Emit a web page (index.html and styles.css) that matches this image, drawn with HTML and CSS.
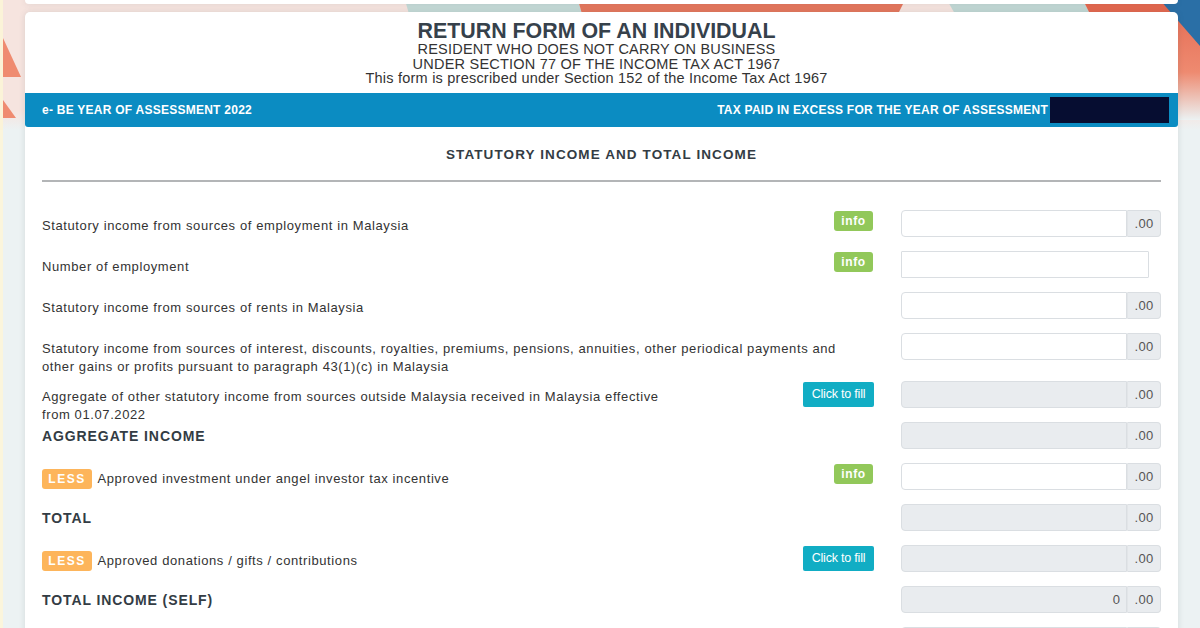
FILE: index.html
```html
<!DOCTYPE html>
<html lang="en">
<head>
    <meta charset="UTF-8">
    <meta name="viewport" content="width=device-width, initial-scale=1.0">
    <title>e-BE Year of Assessment 2022</title>
    <link rel="stylesheet" href="styles.css">
</head>
<body>
    <!-- decorative backdrop behind the cards -->
    <div class="backdrop">
        <svg width="1200" height="130" viewBox="0 0 1200 130" preserveAspectRatio="none">
            <defs>
                <linearGradient id="fade" x1="0" y1="0" x2="0" y2="1">
                    <stop offset="0" stop-color="#f6e4df"/>
                    <stop offset="0.85" stop-color="#f6e4df"/>
                    <stop offset="1" stop-color="#ecf2f3"/>
                </linearGradient>
                <linearGradient id="coralFade" x1="0" y1="0" x2="0" y2="1">
                    <stop offset="0" stop-color="#e46a52"/>
                    <stop offset="0.6" stop-color="#ee8a70"/>
                    <stop offset="1" stop-color="#ecf2f3"/>
                </linearGradient>
            </defs>
            <rect x="0" y="0" width="1200" height="130" fill="url(#fade)"/>
            <polygon points="0,0 3,0 3,130 0,130" fill="#fbf3d8"/>
            <polygon points="3,38 21,77 3,77" fill="#ef8b70"/>
            <polygon points="3,100 16,118 3,118" fill="#ef8b70"/>
            <polygon points="405,0 578,0 582,14 409,14" fill="#c5dad7"/>
            <polygon points="578,0 905,0 898,14 582,14" fill="#e5775d"/>
            <polygon points="947,0 1083,0 1090,14 955,14" fill="#c2d8d5"/>
            <polygon points="1083,0 1200,0 1200,14 1090,14" fill="#e4684f"/>
            <rect x="1178" y="0" width="22" height="120" fill="url(#coralFade)"/>
            <polygon points="1160,0 1200,0 1200,46" fill="#2a6fa6"/>
        </svg>
    </div>

    <div class="page">
        <div class="card card-top"></div>

        <div class="card form-card">
            <header class="form-head">
                <h1>RETURN FORM OF AN INDIVIDUAL</h1>
                <p>RESIDENT WHO DOES NOT CARRY ON BUSINESS<br>
                UNDER SECTION 77 OF THE INCOME TAX ACT 1967<br>
                This form is prescribed under Section 152 of the Income Tax Act 1967</p>
            </header>

            <div class="year-bar">
                <span>e- BE YEAR OF ASSESSMENT 2022</span>
                <span class="excess">TAX PAID IN EXCESS FOR THE YEAR OF ASSESSMENT<span class="redacted"></span></span>
            </div>

            <div class="form-body">
                <h2>STATUTORY INCOME AND TOTAL INCOME</h2>
                <hr>

                <div class="row">
                    <div class="label">Statutory income from sources of employment in Malaysia</div>
                    <div class="action"><span class="badge-info">info</span></div>
                    <div class="field"><input class="input" type="text"><span class="addon">.00</span></div>
                </div>

                <div class="row">
                    <div class="label">Number of employment</div>
                    <div class="action"><span class="badge-info">info</span></div>
                    <div class="field"><input class="input input-plain" type="text"></div>
                </div>

                <div class="row">
                    <div class="label">Statutory income from sources of rents in Malaysia</div>
                    <div class="action"></div>
                    <div class="field"><input class="input" type="text"><span class="addon">.00</span></div>
                </div>

                <div class="row row-tall">
                    <div class="label">Statutory income from sources of interest, discounts, royalties, premiums, pensions, annuities, other periodical payments and<br>other gains or profits pursuant to paragraph 43(1)(c) in Malaysia</div>
                    <div class="action"></div>
                    <div class="field"><input class="input" type="text"><span class="addon">.00</span></div>
                </div>

                <div class="row">
                    <div class="label">Aggregate of other statutory income from sources outside Malaysia received in Malaysia effective<br>from 01.07.2022</div>
                    <div class="action"><button class="btn-fill">Click to fill</button></div>
                    <div class="field"><input class="input readonly" type="text" readonly><span class="addon">.00</span></div>
                </div>

                <div class="row">
                    <div class="label heading">AGGREGATE INCOME</div>
                    <div class="action"></div>
                    <div class="field"><input class="input readonly" type="text" readonly><span class="addon">.00</span></div>
                </div>

                <div class="row">
                    <div class="label"><span class="badge-less">LESS</span> Approved investment under angel investor tax incentive</div>
                    <div class="action"><span class="badge-info">info</span></div>
                    <div class="field"><input class="input" type="text"><span class="addon">.00</span></div>
                </div>

                <div class="row">
                    <div class="label heading">TOTAL</div>
                    <div class="action"></div>
                    <div class="field"><input class="input readonly" type="text" readonly><span class="addon">.00</span></div>
                </div>

                <div class="row">
                    <div class="label"><span class="badge-less">LESS</span> Approved donations / gifts / contributions</div>
                    <div class="action"><button class="btn-fill">Click to fill</button></div>
                    <div class="field"><input class="input readonly" type="text" readonly><span class="addon">.00</span></div>
                </div>

                <div class="row">
                    <div class="label heading">TOTAL INCOME (SELF)</div>
                    <div class="action"></div>
                    <div class="field"><input class="input readonly num" type="text" value="0" readonly><span class="addon">.00</span></div>
                </div>

                <div class="row">
                    <div class="label"></div>
                    <div class="action"></div>
                    <div class="field"><input class="input" type="text"><span class="addon"></span></div>
                </div>
            </div>
        </div>
    </div>
</body>
</html>
```

FILE: styles.css
```css
body {
    margin: 0;
    font-family: "Liberation Sans", Arial, sans-serif;
    color: #333;
    background: linear-gradient(90deg, #fbf5dc 0, #fbf5dc 3px, #ecf2f3 3px);
    min-height: 628px;
    overflow: hidden;
}
.backdrop {
    position: absolute;
    top: 0;
    left: 0;
    width: 1200px;
    height: 130px;
    z-index: 0;
}
.backdrop svg {
    display: block;
}
.page {
    position: relative;
    z-index: 1;
    padding: 0 22px 0 25px;
}
.card {
    background: #fff;
    box-shadow: 0 0 6px rgba(60, 70, 80, 0.14);
}
.card-top {
    height: 4px;
    border-radius: 0 0 4px 4px;
    margin-bottom: 8px;
}
.form-card {
    border-radius: 5px 5px 0 0;
    min-height: 640px;
}
.form-head {
    text-align: center;
    padding: 9px 10px 7.5px 0;
}
.form-head h1 {
    margin: 0;
    font-size: 21.4px;
    line-height: 21px;
    font-weight: bold;
    color: #36414b;
}
.form-head p {
    margin: 0;
    font-size: 14.5px;
    line-height: 14.5px;
    letter-spacing: 0.22px;
    color: #333;
}
.year-bar {
    display: flex;
    justify-content: space-between;
    align-items: center;
    height: 34px;
    padding: 0 9px 0 17px;
    background: #0b8cc2;
    border-radius: 0 0 3px 3px;
    color: #fff;
    font-size: 12px;
    font-weight: bold;
    letter-spacing: 0.25px;
}
.excess {
    display: flex;
    align-items: center;
}
.redacted {
    display: inline-block;
    width: 119px;
    height: 26px;
    margin-left: 2px;
    background: #060d31;
}
.form-body {
    padding: 19px 17px 0;
}
.form-body h2 {
    margin: 0;
    text-align: center;
    font-size: 13.5px;
    line-height: 18px;
    letter-spacing: 1.1px;
    color: #333c44;
}
.form-body hr {
    margin: 15.5px 0 28px;
    border: 0;
    height: 2px;
    background: #b3b5b7;
}
.row {
    display: flex;
    height: 27px;
    margin-bottom: 14px;
}
.row-tall {
    height: 34px;
}
.label {
    flex: 1;
    min-width: 0;
    padding-top: 7px;
    font-size: 13px;
    line-height: 18px;
    letter-spacing: 0.6px;
    white-space: nowrap;
    color: #333;
}
.label.heading {
    padding-top: 5px;
    font-size: 14px;
    font-weight: bold;
    letter-spacing: 0.9px;
    color: #333c44;
}
.action {
    display: flex;
    justify-content: flex-end;
    align-items: flex-start;
    padding-top: 1px;
    margin-right: 28px;
}
.badge-info {
    display: inline-block;
    width: 39px;
    height: 20px;
    line-height: 20px;
    text-align: center;
    background: #92c85a;
    border-radius: 3px;
    color: #fff;
    font-size: 12px;
    font-weight: bold;
    letter-spacing: 0.6px;
}
.badge-less {
    display: inline-block;
    width: 50px;
    height: 20px;
    line-height: 20px;
    text-align: center;
    background: #fdb55b;
    border-radius: 3px;
    color: #fff;
    font-size: 12px;
    font-weight: bold;
    letter-spacing: 1.5px;
    vertical-align: top;
    margin-top: -1px;
    margin-right: 2px;
}
.btn-fill {
    width: 71px;
    height: 25px;
    padding: 0;
    margin-right: -1px;
    border: 0;
    border-radius: 2px;
    background: #11adc4;
    color: #fff;
    font-family: "Liberation Sans", Arial, sans-serif;
    font-size: 12.5px;
    letter-spacing: -0.2px;
}
.field {
    display: flex;
    width: 260px;
}
.input {
    box-sizing: border-box;
    flex: 1;
    min-width: 0;
    height: 27px;
    margin: 0;
    padding: 0 6px;
    border: 1px solid #dadee2;
    border-radius: 4px 0 0 4px;
    background: #fff;
    font-family: "Liberation Sans", Arial, sans-serif;
    font-size: 13px;
    color: #555;
    outline: none;
}
.input-plain {
    flex: none;
    width: 248px;
    border-radius: 1px;
}
.input.readonly {
    background: #e9ecef;
}
.input.num {
    text-align: right;
}
.addon {
    box-sizing: border-box;
    width: 34px;
    height: 27px;
    line-height: 25px;
    text-align: center;
    border: 1px solid #dadee2;
    border-left: 1px solid #e2e5e8;
    border-radius: 0 4px 4px 0;
    background: #e9ecef;
    font-size: 13px;
    color: #555;
    letter-spacing: 0.3px;
}
```
